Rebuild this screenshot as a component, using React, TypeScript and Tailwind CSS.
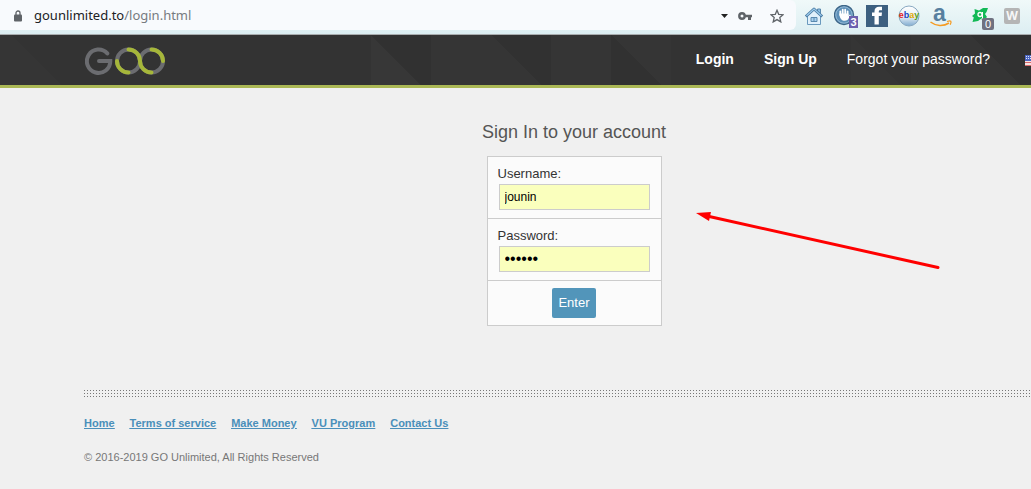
import type { ReactNode } from "react"

const footerLinks = ["Home", "Terms of service", "Make Money", "VU Program", "Contact Us"]

function HouseIcon() {
    return (
        <svg className="h-5 w-5" viewBox="0 0 20 20">
            <path d="M13.500 3h3v6h-3z" fill="#8fc0e4" stroke="#5a89ae"/>
            <path d="M3.500 9.500 10 4l6.500 5.500v9h-13z" fill="#e0f0fb" stroke="#6a99bd"/>
            <path d="M1.800 10.500 10 3l8.200 7.500" fill="none" stroke="#4b7ba3" strokeWidth="2.800" strokeLinejoin="round"/>
            <path d="M2.500 9.800 10 3l7.500 6.800" fill="none" stroke="#9ccbec" strokeWidth="1.200"/>
            <path d="M7 11.500h6v4H7zM10 11.500v4" fill="#a9d1ef" stroke="#5a89ae"/>
        </svg>
    )
}

function HandIcon() {
    return (
        <svg className="h-[22px] w-[22px]" viewBox="0 0 22 22">
            <circle cx="10" cy="10" r="9.500" fill="#5e91b9" stroke="#3d6688" strokeWidth="1.400"/>
            <circle cx="10" cy="10" r="8.200" fill="none" stroke="#abcbe2" strokeWidth=".7"/>
            <path d="M6.300 10V6.300M8.700 10V4.600M11.200 10V4.600M13.600 10V6.300" stroke="#fff" strokeWidth="1.800" strokeLinecap="round"/>
            <path d="M5.400 8.500h9.100V11l1.400-1.500 1 .8-3.200 4.500c-2 1.600-5 1.300-6.500-.5-1-1.300-1.800-2.800-1.800-5.800z" fill="#fff"/>
        </svg>
    )
}

function EbayIcon() {
    return (
        <svg className="h-[22px] w-[22px]" viewBox="0 0 22 22">
            <defs>
                <linearGradient id="ball" x1="0" y1="0" x2="0" y2="1">
                    <stop offset="0" stopColor="#fff"/>
                    <stop offset=".55" stopColor="#e3edf5"/>
                    <stop offset="1" stopColor="#7fabd0"/>
                </linearGradient>
            </defs>
            <circle cx="11" cy="11" r="10" fill="url(#ball)" stroke="#8aa9c2"/>
            <text x="11" y="13" textAnchor="middle" fontFamily="Liberation Sans" fontSize="9" fontWeight="bold">
                <tspan fill="#e2231a">e</tspan><tspan fill="#1745c4">b</tspan><tspan fill="#e0a800">a</tspan><tspan fill="#5a9f18">y</tspan>
            </text>
        </svg>
    )
}

function AmazonIcon() {
    return (
        <svg className="h-[22px] w-[22px] overflow-visible" viewBox="0 0 22 22">
            <text x="3" y="16" fontFamily="Liberation Sans" fontSize="23" fontWeight="bold" fill="#577f9f">a</text>
            <path d="M.500 17c5.500 4.300 13 4.500 18.500 1" fill="none" stroke="#f59b22" strokeWidth="1.500"/>
            <path d="M17 16.500c4-1.200 5-.5 3.200 3.300" fill="none" stroke="#f59b22" strokeWidth="1.300"/>
        </svg>
    )
}

function Logo() {
    return (
        <svg className="h-7 w-20" viewBox="0 0 80 28" fill="none" strokeWidth="4" strokeLinecap="round">
            <path d="M22.300 6.400A11.700 11.700 0 1 0 25.300 14H14" stroke="#6b6c70"/>
            <circle cx="43.500" cy="14" r="11.500" stroke="#6b6c70"/>
            <circle cx="66.500" cy="14" r="11.500" stroke="#6b6c70"/>
            <path d="M32 14A11.500 11.500 0 0 0 43.500 25.500M43.500 2.500A11.500 11.500 0 0 1 55 14A11.500 11.500 0 0 0 66.500 25.500M66.500 2.500A11.500 11.500 0 0 1 78 14" stroke="#a6b73a"/>
        </svg>
    )
}

function Badge({ children, className }: { children: ReactNode, className: string }) {
    return <span className={`absolute flex items-center justify-center text-[11px] leading-3 text-white ${className}`}>{children}</span>
}

function BrowserBar() {
    return (
        <div className="flex h-[35px] items-start border-b border-[#a9adaf] bg-linear-to-b from-[#f0f9f9] to-[#dceef2]">
            <div className="flex h-[30px] flex-1 items-center rounded-r-md bg-[#f8fafd] pt-0.5 pr-3 pl-[14px]">
                <svg className="h-3 w-2" viewBox="0 0 8 12">
                    <path d="M2 5V3a2 2 0 0 1 4 0v2" fill="none" stroke="#5f6368" strokeWidth="1.300"/>
                    <rect y="4.500" width="8" height="7" rx="1" fill="#5f6368"/>
                </svg>
                <span className="ml-3 flex-1 font-['Noto_Sans',sans-serif] text-[13px] text-[#777b80]">
                    <span className="text-[#202124]">gounlimited.to</span>/login.html
                </span>
                <svg className="h-1 w-[7px]" viewBox="0 0 7 4"><path d="M0 0h7L3.500 4z" fill="#222"/></svg>
                <svg className="ml-[10px] h-2 w-[14px]" viewBox="0 0 14 8">
                    <circle cx="4" cy="4" r="2.700" fill="none" stroke="#5f6368" strokeWidth="2.400"/>
                    <path d="M7 2.700h7v2.600h-1V8h-3V5.300H7z" fill="#5f6368"/>
                </svg>
                <svg className="ml-[18px] h-[14px] w-[14px]" viewBox="0 0 14 14">
                    <path d="m7 1.300 1.700 4 4.400.4-3.300 2.900 1 4.300L7 10.600l-3.800 2.300 1-4.300L.9 5.700l4.400-.4z" fill="none" stroke="#5f6368" strokeWidth="1.300"/>
                </svg>
            </div>
            <div className="flex h-8 items-center gap-[10px] pr-[11px] pl-2">
                <HouseIcon/>
                <span className="relative flex">
                    <HandIcon/>
                    <Badge className="-right-0.5 -bottom-px h-3 w-[9px] bg-[#6c5fae] font-bold">3</Badge>
                </span>
                <svg className="h-[22px] w-[22px]" viewBox="0 0 22 22">
                    <path d="M0 0h22v22H0z" fill="#3d6080"/>
                    <path d="M8.500 19.500V11H6V7.500h2.500V6.300C8.500 3.300 10.300 1.700 13 1.700h3v3.500h-1.700c-1 0-1.500.4-1.500 1.300v1H16l-.4 3.500h-2.800v8.500z" fill="#fff"/>
                </svg>
                <EbayIcon/>
                <AmazonIcon/>
                <span className="relative mr-[6px] ml-[10px] flex">
                    <svg className="h-4 w-4" viewBox="0 0 16 16">
                        <path d="m2.500 1 4.500 1.500L11 0l5 0-1.500 4L13 6l2 3-3 3-4-.5L6 13l-5.500 1 1.300-4.500L0 8l3-2.500z" fill="#12b956"/>
                        <circle cx="8" cy="6.500" r="2" fill="none" stroke="#fff" strokeWidth="1.300"/>
                        <path d="M10.500 4v6.500l-2 1" fill="none" stroke="#fff"/>
                    </svg>
                    <Badge className="-right-[6px] -bottom-[6px] h-3 w-3 rounded-xs bg-[#6f7180]">0</Badge>
                </span>
                <span className="flex h-4 w-4 items-center justify-center rounded-xs bg-[#b5b5b5] font-['Open_Sans',sans-serif] text-xs font-bold text-[#f7f7f7]">W</span>
            </div>
        </div>
    )
}

function HeaderPattern() {
    return (
        <svg className="absolute inset-0 h-full w-full">
            <path d="M0 0h12l50 50H0zM431 0h61l50 50H431zM551 0h60v50h-60zM611 0h60v50h-10zM851 0l50 50h10V0h60l50 50H851z" fill="#353535"/>
            <path d="M371 0l50 50h-50z" fill="#373737"/>
            <path d="M371 0h60v50h-10zM492 0h59v50h-9zM611 0l50 50h-50zM971 0h60v50h-10z" fill="#313131"/>
        </svg>
    )
}

function Header() {
    return (
        <header className="relative h-[53px] overflow-hidden border-b-3 border-[#abb855] bg-[#333]">
            <HeaderPattern/>
            <div className="relative ml-[85px] flex h-full min-w-[980px] items-center pr-6">
                <a href="#" aria-label="Go Unlimited" className="pt-0.5"><Logo/></a>
                <nav className="ml-auto flex items-center gap-[30px] pb-0.5 text-sm text-white">
                    <a href="#" className="font-bold">Login</a>
                    <a href="#" className="font-bold">Sign Up</a>
                    <a href="#">Forgot your password?</a>
                    <svg className="mt-0.5 ml-[5px] h-[11px] w-4" viewBox="0 0 16 11">
                        <path d="M0 0h16v11H0z" fill="#f5e4e4"/>
                        <path d="M0 7.500h16M0 10.500h16M8 1.500h8M8 4.500h8" stroke="#d96a6a"/>
                        <path d="M0 0h8v6H0z" fill="#4c66c0"/>
                        <path d="M1 1.500h7M1 3.500h7" stroke="#dfe5fa" strokeDasharray="1 1"/>
                    </svg>
                </nav>
            </div>
        </header>
    )
}

type FieldProps = {
    id: string,
    label: string,
    type: string,
    value: string,
    textSize: string,
}

function Field({ id, label, type, value, textSize }: FieldProps) {
    return (
        <div className="border-b border-[#ccc] px-[10px] py-2">
            <label htmlFor={id} className="mb-px block text-[13px] leading-[18px] text-[#333]">{label}</label>
            <input
                id={id}
                type={type}
                defaultValue={value}
                className={`ml-px block h-[26px] w-[151px] border border-[#ccc] bg-[#faffbd] px-[5px] text-black ${textSize}`}
            />
        </div>
    )
}

function LoginForm() {
    return (
        <form className="flex flex-col items-center">
            <h1 className="text-lg leading-6 text-[#555]">Sign In to your account</h1>
            <div className="mt-3 w-[175px] border border-[#ccc] bg-[#fbfbfb]">
                <Field id="username" label="Username:" type="text" value="jounin" textSize="text-xs"/>
                <Field id="password" label="Password:" type="password" value="secret" textSize="text-base"/>
                <div className="flex justify-center py-[7px]">
                    <button type="button" className="h-[30px] rounded-xs bg-[#5295ba] px-[6px] text-[13px] text-white">Enter</button>
                </div>
            </div>
        </form>
    )
}

function Footer() {
    return (
        <footer className="mt-[63px] text-[11px] leading-4">
            <svg className="block h-2 w-full" shapeRendering="crispEdges">
                <defs>
                    <pattern id="dots" width="3" height="3" patternUnits="userSpaceOnUse">
                        <rect y="1" width="1" height="1" fill="#777"/>
                    </pattern>
                </defs>
                <rect width="100%" height="8" fill="url(#dots)"/>
            </svg>
            <nav className="mt-[18px] flex gap-[15px] font-bold text-[#4a8fba] underline">
                {footerLinks.map((link) => <a key={link} href="#">{link}</a>)}
            </nav>
            <p className="mt-[18px] text-[#777]">© 2016-2019 GO Unlimited, All Rights Reserved</p>
        </footer>
    )
}

export default function App() {
    return (
        <div className="relative min-h-screen overflow-hidden bg-[#f0f0f0] font-['Liberation_Sans',Arial,sans-serif]">
            <BrowserBar/>
            <Header/>
            <main className="ml-[84px] min-w-[980px] pt-8">
                <LoginForm/>
                <Footer/>
            </main>
            <svg className="absolute top-[208px] left-[695px] h-[64px] w-[246px]" viewBox="0 0 246 64">
                <path d="M12 8 243 59.500" stroke="#f00" strokeWidth="3" strokeLinecap="round"/>
                <path d="M1 5l15-1-2 9z" fill="#f00"/>
            </svg>
        </div>
    )
}
